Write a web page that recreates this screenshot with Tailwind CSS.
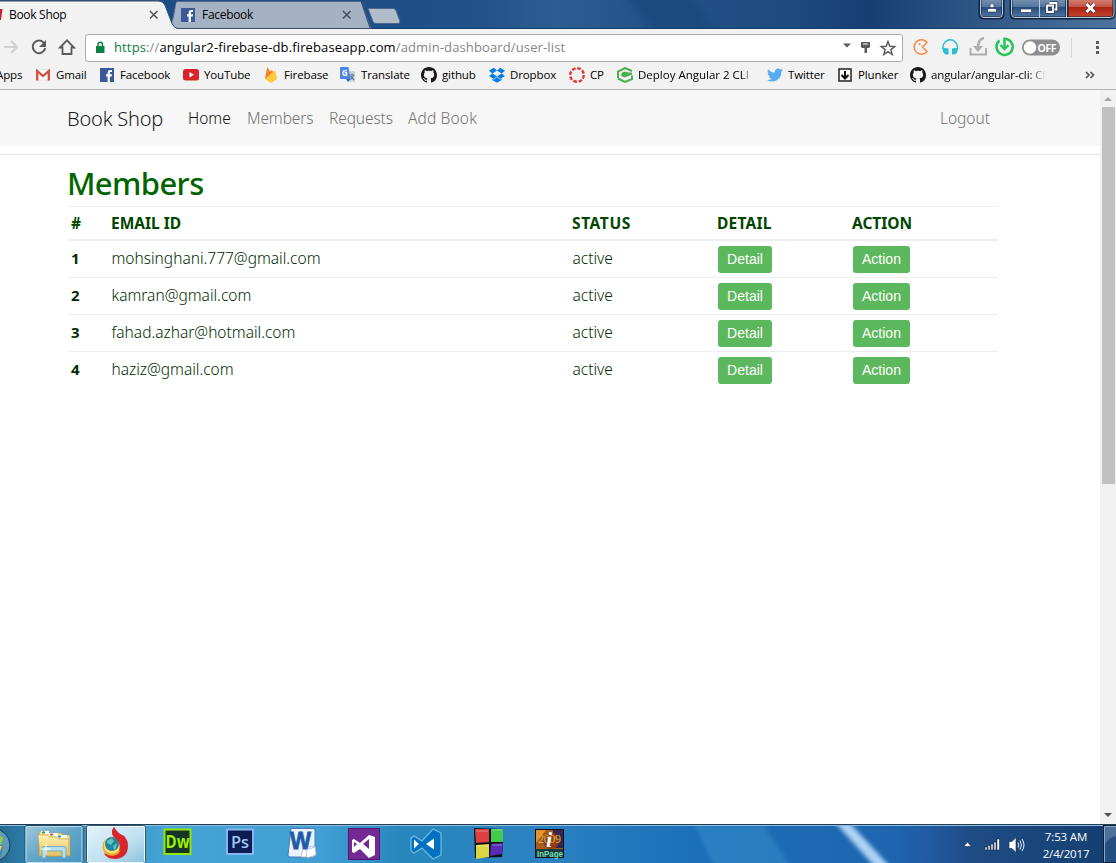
<!DOCTYPE html>
<html lang="en">
<head>
<meta charset="utf-8">
<title>Book Shop</title>
<script src="https://cdn.jsdelivr.net/npm/@tailwindcss/browser@4"></script>
</head>
<body class="w-[1116px] h-[863px] overflow-hidden flex flex-col bg-white font-['Open_Sans',sans-serif] text-black">
<svg class="hidden">
  <symbol id="gh" viewBox="0 0 16 16"><path fill="#181616" d="M8 0C3.58 0 0 3.58 0 8c0 3.54 2.29 6.53 5.47 7.59.4.07.55-.17.55-.38v-1.49c-2.01.37-2.53-.49-2.69-.94-.09-.23-.48-.94-.82-1.13-.28-.15-.68-.52-.01-.53.63-.01 1.08.58 1.23.82.72 1.21 1.87.87 2.33.66.07-.52.28-.87.51-1.07-1.78-.2-3.64-.89-3.64-3.95 0-.87.31-1.59.82-2.15-.08-.2-.36-1.02.08-2.12 0 0 .67-.21 2.2.82.64-.18 1.32-.27 2-.27s1.36.09 2 .27c1.53-1.04 2.2-.82 2.2-.82.44 1.1.16 1.92.08 2.12.51.56.82 1.27.82 2.15 0 3.07-1.87 3.75-3.65 3.95.29.25.54.73.54 1.48v2.2c0 .21.15.46.55.38A8 8 0 0 0 16 8c0-4.42-3.58-8-8-8z"/></symbol>
  <symbol id="fb" viewBox="0 0 14 14"><path fill="#3b5998" d="M0 0h14v14H0z"/><path fill="#fff" d="M7.6 14V8.5H6V6.3h1.6V4.9C7.6 3 8.700 2 10.300 2H12v2.100h-1.100c-.8 0-1 .4-1 1v1.200H12l-.3 2.200H9.900V14z"/></symbol>
</svg>

<!-- Tab strip -->
<header class="relative h-[29px] shrink-0 text-xs">
  <svg class="absolute inset-0" width="1116" height="29">
    <defs><linearGradient id="sky"><stop offset="0" stop-color="#184a84"/><stop offset=".42" stop-color="#205088"/><stop offset=".5" stop-color="#2c5d92"/><stop offset=".57" stop-color="#245389"/><stop offset=".7" stop-color="#1d4b80"/><stop offset=".78" stop-color="#173f72"/><stop offset="1" stop-color="#4d739e"/></linearGradient><filter id="haze"><feGaussianBlur stdDeviation="3 0"/></filter></defs>
    <path fill="url(#sky)" d="M0 0h1116v29H0z"/>
    <path fill="#194779" d="M628 0h66l20 29h-62z" opacity=".6" filter="url(#haze)"/>
    <path fill="#9fadc0" stroke="#596b87" d="M170 28.500 173 18 176.500 1.500H361L371 28.500z"/>
    <path fill="#a5b2c3" d="M174 27 176 3H361L369 28z"/>
    <path fill="#f2f2f2" d="M0 1.500H158Q163 1.500 165 5l7 19q2 4 6 5H0z"/>
    <path fill="none" stroke="#374f71" d="M0 .5H159q4 0 6 5l7 18q2 4 5 5H372M361 1l9 27"/>
    <path fill="#b2bdcb" stroke="#53698a" d="M368 8.500h25q2 0 3 2l4 11q0 2-2 2h-22q-2 0-3-2z"/>
    <path fill="#153f73" d="M372 28h744v1H372z"/>
  </svg>
  <div class="absolute inset-0 flex items-center h-[29px]">
    <svg class="shrink-0" width="9" height="29"><path fill="#c3202e" d="M0 9h2.500L1 20H0z"/></svg>
    <span class="w-[139px] tracking-[-0.3px]">Book Shop</span>
    <svg class="shrink-0" width="33" height="10"><path stroke="#555" stroke-width="1.600" d="m2 1 7.500 7.500m0-7.500L2 8.500"/></svg>
    <svg class="shrink-0" width="14" height="14"><use href="#fb"/></svg>
    <span class="w-[140px] ml-[7px] tracking-[-0.3px]">Facebook</span>
    <svg class="shrink-0" width="12" height="10"><path stroke="#44505e" stroke-width="1.600" d="m1 1 7.500 7.500m0-7.500L1 8.500"/></svg>
  </div>
  <svg class="absolute right-0 top-0" width="138" height="20">
    <defs><linearGradient id="red" x2="0" y2="1"><stop stop-color="#d98b80"/><stop offset=".45" stop-color="#c35748"/><stop offset=".5" stop-color="#ad2213"/><stop offset="1" stop-color="#c34a32"/></linearGradient>
    <linearGradient id="glass" x2="0" y2="1"><stop stop-color="#8099b7"/><stop offset=".48" stop-color="#54759d"/><stop offset=".5" stop-color="#294e7d"/><stop offset="1" stop-color="#557aa6"/></linearGradient></defs>
    <path fill="url(#glass)" stroke="#122440" stroke-width="3" d="M2 -3V14q0 4 4 4H21q4 0 4-4V-3z"/>
    <path fill="none" stroke="#bac9da" d="M2.500 -3V14q0 3.500 3.500 3.500H21q3.500 0 3.500-3.500V-3z"/>
    <path fill="url(#glass)" stroke="#122440" stroke-width="3" d="M33 -3V14q0 4 4 4H89V-3z"/>
    <path fill="url(#red)" stroke="#122440" stroke-width="3" d="M89 -3V18h42q5 0 5-4V-3z"/>
    <path fill="none" stroke="#bac9da" d="M33.500 -3V14q0 3.500 3.500 3.500h95q4 0 4-3.500V-3M61.500 0v17M88.500 0v17"/>
    <path fill="#fff" stroke="#233b5c" stroke-width=".7" d="M12 4.500q2-2 4 0v3h-4zM9.500 12v-2q0-1.500 2-1.500h5q2 0 2 1.500v2zM42.500 9h11v3.500h-11z"/>
    <path fill="none" stroke="#2b4160" stroke-width="3.500" d="M69 5.500h6v6.500h-6zM72 3h6.500v6.500h-2"/>
    <path fill="none" stroke="#fff" stroke-width="1.800" d="M69 5.500h6v6.500h-6zM71.500 3h7v6.500h-2"/>
    <path stroke="#5c3338" stroke-width="4.500" d="m108.500 4 8 8m0-8-8 8"/><path stroke="#fff" stroke-width="2.800" d="m108.500 4 8 8m0-8-8 8"/>
  </svg>
</header>

<!-- Address bar -->
<div class="h-[37px] shrink-0 bg-[#f2f2f2] flex items-center">
  <svg class="shrink-0" width="85" height="37" fill="none" stroke="#5a5a5a" stroke-width="2">
    <path stroke="#d0d0d0" d="M4 18h13m-6-6 6 6-6 6"/>
    <path d="M44 14a6.300 6.300 0 1 0 1.200 5"/><path fill="#5a5a5a" stroke="none" d="M46 11v7h-7z"/>
    <path stroke-width="1.800" d="m60 18.500 7-7.200 7 7.200h-2.500V25h-9v-6.500z"/>
  </svg>
  <div class="w-[818px] h-7 box-border border border-[#a9a9a9] rounded-[3px] bg-white flex items-center text-[14px] text-[#858585]">
    <svg class="ml-[9px] shrink-0" width="19" height="14"><path fill="#0b8043" d="M1 5h8.500v7H1z"/><path fill="none" stroke="#0b8043" stroke-width="1.500" d="M3 5V3.500a2.200 2.200 0 0 1 4.500 0V5"/></svg>
    <span class="w-[727px] whitespace-nowrap text-[13px] tracking-[0.13px]"><span class="text-[#0b8043]">https</span>://<span class="text-black">angular2-firebase-db.firebaseapp.com</span>/admin-dashboard/user-list</span>
    <svg class="shrink-0" width="60" height="26" fill="#5a5a5a">
      <path d="M2 8.500h8L6 12.500z"/><path fill-rule="evenodd" d="M20 7h9v5l-1 1h-2v5h-2.500v-5H21l-1-1zm2 1.500v1h5v-1z"/>
      <path fill="none" stroke="#5a5a5a" stroke-width="1.400" d="m47 6.500 1.800 4.800 5 .2-4 3.100 1.500 4.900-4.300-2.900-4.300 2.900 1.500-4.900-4-3.100 5-.2z"/>
    </svg>
  </div>
  <svg class="shrink-0" width="213" height="37" fill="none">
    <path stroke="#ff8540" stroke-width="1.500" stroke-linejoin="round" d="M24 13.500a7.200 7.200 0 1 0 0 9l-4.500-4.500z"/><circle cx="16.500" cy="15" r="1" fill="#ff8540"/>
    <path stroke="#2bbfd4" stroke-width="1.500" d="M40 20v-2a7.200 7.200 0 0 1 14.400 0v2"/><path fill="#2bbfd4" d="M39.500 19h2.500l3.500.500v6h-3q-3-2-3-6.500zM55 19h-2.500l-3.500.500v6h3q3-2 3-6.500z"/>
    <path stroke="#adadad" stroke-width="2" d="M67.500 19v6.500h15.500V19"/><path stroke="#adadad" stroke-width="2.500" d="M81 9q-6 1-6 10"/><path fill="#adadad" d="M70 17h10l-5 6z"/>
    <path stroke="#27c45c" stroke-width="2.500" d="M96.500 11.500a8.100 8.100 0 1 0 5-1.800v10"/><path stroke="#27c45c" stroke-width="2.400" d="m97.500 16 4 4 4-4"/>
    <rect x="119" y="10.500" width="38" height="16" rx="8" fill="#8e8e8e"/><circle cx="127" cy="18.500" r="6.200" fill="#fff"/>
    <text x="134.500" y="22.500" font-family="Open Sans" font-size="10.500" font-weight="700" fill="#fff" textLength="19">OFF</text>
    <path stroke="#d5d5d5" d="M168.500 9v19"/><path fill="#5a5a5a" d="M193 12h3v3h-3zM193 17h3v3h-3zM193 22h3v3h-3z"/>
  </svg>
</div>

<!-- Bookmarks -->
<nav class="h-6 pb-[5px] shrink-0 bg-[#f2f2f2] border-b border-[#b4b4b4] flex items-center text-[11.5px] tracking-[-0.12px] whitespace-nowrap overflow-hidden">
  <div class="w-9 shrink-0 -indent-[4px]">Apps</div>
  <a class="w-16 shrink-0 flex items-center gap-[6px]"><svg width="14" height="14"><path fill="#fff" stroke="#ccc" stroke-width=".5" d="M0 2h14v10H0z"/><path fill="none" stroke="#d54b3d" stroke-width="2.300" d="M1.200 12.500V3L7 8l5.800-5v9.500"/></svg>Gmail</a>
  <a class="w-[83px] shrink-0 flex items-center gap-[6px]"><svg width="14" height="14"><use href="#fb"/></svg>Facebook</a>
  <a class="w-[82px] shrink-0 flex items-center gap-[5px]"><svg width="16" height="14"><rect y="1" width="16" height="11.500" rx="2.500" fill="#d9242b"/><path fill="#fff" d="m6.500 4 4.500 2.700-4.500 2.800z"/></svg>YouTube</a>
  <a class="w-[75px] shrink-0 flex items-center gap-[6px]"><svg width="13" height="16"><path fill="#f58220" d="m0 12 2-11q.5-1 1 0l2 3.500L7 3l5 9z"/><path fill="#fcca3f" d="m0 12 9-8q1-1 1.500.5L12 12l-5 3.500q-1 .5-2 0z"/></svg>Firebase</a>
  <a class="w-[81px] shrink-0 flex items-center gap-[5px]"><svg width="16" height="16"><path fill="#d3d3d3" d="M7 4h8v11H9z"/><path fill="none" stroke="#657b91" stroke-width="1.200" d="M9.500 8h5M12 6.500V8m1.500 0q-.5 3-3 4.500M10.500 9l3.500 4"/><path fill="#4a86e8" d="M1 0h7.500l2 12H1q-1 0-1-1V1q0-1 1-1z"/><path fill="#2a5cb7" d="M6 12h4.500L8 15z"/><text x="1.800" y="8.500" font-family="Open Sans" font-size="8" font-weight="700" fill="#fff">G</text></svg>Translate</a>
  <a class="w-[68px] shrink-0 flex items-center gap-[5px]"><svg width="16" height="16"><use href="#gh"/></svg>github</a>
  <a class="w-20 shrink-0 flex items-center gap-[5px]"><svg width="16" height="16"><path fill="#007ee5" d="M4.700.8 8 3.500 3.300 6.400 0 3.800zM11.300.8 16 3.800l-3.300 2.600L8 3.500zM0 9l3.300-2.600L8 9.300l-3.300 2.700zM16 9l-3.300-2.600L8 9.300l3.300 2.700zM8 10l3.300 2.700 1.500-.9v1.100L8 15.700l-4.800-2.800v-1.100l1.500.9z"/></svg>Dropbox</a>
  <a class="w-12 shrink-0 flex items-center gap-[5px]"><svg width="16" height="16"><circle cx="8" cy="8" r="6.800" fill="none" stroke="#df3a36" stroke-width="2.400" stroke-dasharray="3.700 1.640"/></svg>CP</a>
  <a class="w-[150px] shrink-0 flex items-center gap-[5px]"><svg width="16" height="16"><path fill="none" stroke="#4caf50" stroke-width="2" d="M1 11V4.500L8 1l7 3M15 8.500V12l-7 3-7-3.500"/><path fill="#4caf50" d="m4 7.500 1-2 3-1 3.500 1 3.500 0v2l-3.500 1.500-3.500 1.500-3-1z"/></svg><span class="w-[116px] overflow-hidden tracking-normal mask-r-from-90% mask-r-to-98%">Deploy Angular 2 CLI A</span></a>
  <a class="w-[71px] shrink-0 flex items-center gap-[5px]"><svg width="16" height="16" viewBox="0 0 24 24"><path fill="#55acee" d="M24 4.600a10 10 0 0 1-2.800.8 5 5 0 0 0 2.100-2.700 10 10 0 0 1-3.100 1.200 4.900 4.900 0 0 0-8.400 4.500A14 14 0 0 1 1.700 3.200a4.900 4.900 0 0 0 1.500 6.500 5 5 0 0 1-2.200-.6 4.900 4.900 0 0 0 3.900 4.900 5 5 0 0 1-2.200.1 4.900 4.900 0 0 0 4.600 3.400A9.900 9.900 0 0 1 0 19.500 14 14 0 0 0 21.500 7.100 10 10 0 0 0 24 4.600z"/></svg>Twitter</a>
  <a class="w-[72px] shrink-0 flex items-center gap-[6px]"><svg width="14" height="14"><path fill="#fff" stroke="#222" stroke-width="1.500" d="M1 1h12v12H1z"/><path fill="none" stroke="#111" stroke-width="2" d="M7 3v7M3.500 7 7 10.500 10.500 7"/></svg>Plunker</a>
  <a class="w-[174px] shrink-0 flex items-center gap-[5px]"><svg width="16" height="16"><use href="#gh"/></svg><span class="w-[117px] overflow-hidden mask-r-from-85% mask-r-to-98%">angular/angular-cli: CLI</span></a>
  <svg class="shrink-0" width="12" height="12" fill="none" stroke="#555" stroke-width="1.700"><path d="m2 3 3 3-3 3m4.500-6 3 3-3 3"/></svg>
</nav>

<!-- Page -->
<div class="flex-1 min-h-0 flex">
  <div class="flex-1 font-['Noto_Sans',sans-serif]">
    <nav class="h-14 bg-[#f7f7f7] flex items-center pl-[67px] pr-[110px] pt-[2px] text-[15.500px] font-light text-[#727272]">
      <a class="w-[121px] text-[20px] text-[#1c1c1c] tracking-[-0.2px] whitespace-nowrap">Book Shop</a>
      <a class="w-[59px] text-[#111]">Home</a>
      <a class="w-[82px] tracking-[-0.1px]">Members</a>
      <a class="w-[79px] tracking-[-0.1px]">Requests</a>
      <a class="flex-1 tracking-[0.15px]">Add Book</a>
      <a>Logout</a>
    </nav>
    <div class="h-[9px] border-b border-[#e4e4e4]"></div>
    <main class="ml-[68px] w-[930px]">
      <h1 class="h-[51px] -ml-px pt-2 text-[31px] leading-[40px] font-medium text-[#006400] tracking-[-0.6px]">Members</h1>
      <table class="w-full table-fixed border-separate border-spacing-0 text-[15.500px] leading-[22px] font-light text-[#022c02]">
        <colgroup><col class="w-10"><col class="w-[461px]"><col class="w-[145px]"><col class="w-[135px]"><col></colgroup>
        <thead class="text-left text-[15.500px] text-[#004600]"><tr class="h-[35px] [&>th]:border-t [&>th]:border-b-2 [&>th]:border-[#eceeef] [&>th]:pl-[3px]"><th>#</th><th>EMAIL ID</th><th class="tracking-[0.6px]">STATUS</th><th class="tracking-[0.2px]">DETAIL</th><th>ACTION</th></tr></thead>
        <tbody class="align-top [&_th]:text-left [&_th]:text-[15px] [&_th]:pl-[3px] [&_th]:pt-[6px] [&_td]:pl-[3.500px] [&_td]:pt-[6px]">
          <tr class="h-[37px] [&>*]:border-b [&>*]:border-[#eceeef]"><th>1</th><td>mohsinghani.777@gmail.com</td><td>active</td><td><button class="block -mt-px ml-[0.5px] pb-px w-[54px] h-[27px] rounded-[3px] bg-[#5cb85c] text-white text-sm font-normal font-['Liberation_Sans',sans-serif]">Detail</button></td><td><button class="block -mt-px ml-[0.5px] pb-px w-[57px] h-[27px] rounded-[3px] bg-[#5cb85c] text-white text-sm font-normal font-['Liberation_Sans',sans-serif]">Action</button></td></tr>
          <tr class="h-[37px] [&>*]:border-b [&>*]:border-[#eceeef]"><th>2</th><td>kamran@gmail.com</td><td>active</td><td><button class="block -mt-px ml-[0.5px] pb-px w-[54px] h-[27px] rounded-[3px] bg-[#5cb85c] text-white text-sm font-normal font-['Liberation_Sans',sans-serif]">Detail</button></td><td><button class="block -mt-px ml-[0.5px] pb-px w-[57px] h-[27px] rounded-[3px] bg-[#5cb85c] text-white text-sm font-normal font-['Liberation_Sans',sans-serif]">Action</button></td></tr>
          <tr class="h-[37px] [&>*]:border-b [&>*]:border-[#eceeef]"><th>3</th><td>fahad.azhar@hotmail.com</td><td>active</td><td><button class="block -mt-px ml-[0.5px] pb-px w-[54px] h-[27px] rounded-[3px] bg-[#5cb85c] text-white text-sm font-normal font-['Liberation_Sans',sans-serif]">Detail</button></td><td><button class="block -mt-px ml-[0.5px] pb-px w-[57px] h-[27px] rounded-[3px] bg-[#5cb85c] text-white text-sm font-normal font-['Liberation_Sans',sans-serif]">Action</button></td></tr>
          <tr class="h-[37px]"><th>4</th><td>haziz@gmail.com</td><td>active</td><td><button class="block -mt-px ml-[0.5px] pb-px w-[54px] h-[27px] rounded-[3px] bg-[#5cb85c] text-white text-sm font-normal font-['Liberation_Sans',sans-serif]">Detail</button></td><td><button class="block -mt-px ml-[0.5px] pb-px w-[57px] h-[27px] rounded-[3px] bg-[#5cb85c] text-white text-sm font-normal font-['Liberation_Sans',sans-serif]">Action</button></td></tr>
        </tbody>
      </table>
    </main>
  </div>
  <div class="w-4 bg-[#f1f1f1] flex flex-col items-center">
    <svg width="16" height="17"><path fill="#a3a3a3" d="M4 11h8L8 7z"/></svg>
    <div class="w-[13px] h-[377px] bg-[#c1c1c1]"></div>
    <svg class="mt-auto" width="16" height="17"><path fill="#505050" d="M4 6h8l-4 4z"/></svg>
  </div>
</div>

<!-- Taskbar -->
<footer class="relative h-[39px] shrink-0 text-white">
  <svg class="absolute inset-0" width="1116" height="39">
    <defs><linearGradient id="bar"><stop stop-color="#276a91"/><stop offset=".02" stop-color="#2b7ba8"/><stop offset=".15" stop-color="#45a4d4"/><stop offset=".29" stop-color="#409fd4"/><stop offset=".36" stop-color="#2787bd"/><stop offset=".48" stop-color="#2c82c2"/><stop offset=".62" stop-color="#1c70b8"/><stop offset=".8" stop-color="#1e65af"/><stop offset=".83" stop-color="#205ba3"/><stop offset=".87" stop-color="#1e4c84"/><stop offset="1" stop-color="#143e70"/></linearGradient><filter id="soft"><feGaussianBlur stdDeviation="2"/></filter>
    <linearGradient id="act" x2="1" y2="1"><stop stop-color="#e5f3fb"/><stop offset=".6" stop-color="#bfdff0"/><stop offset="1" stop-color="#89c1df"/></linearGradient>
    <linearGradient id="idle" x2="1" y2="1"><stop stop-color="#a4c9dc"/><stop offset=".5" stop-color="#62a5c8"/><stop offset="1" stop-color="#4897c2"/></linearGradient></defs>
    <path fill="url(#bar)" d="M0 0h1116v39H0z"/>
    <path fill="#469bd6" opacity=".35" d="M692 -5h68l32 50h-77z" filter="url(#soft)"/>
    <path fill="#add3f5" d="M832 -5h14l46 50h-15z" filter="url(#soft)"/>
    <path fill="#203e58" d="M0 0h1116v1H0z"/><path fill="#91bdda" d="M0 1h1116v1H0z"/>
    <rect x="25" y="1.500" width="58" height="37" rx="2" fill="url(#idle)" stroke="#23495f"/><rect x="26" y="2.500" width="56" height="36" rx="1" fill="none" stroke="#bddbea"/>
    <rect x="86.500" y="1.500" width="59" height="37" rx="2" fill="url(#act)" stroke="#31576d"/><rect x="87.500" y="2.500" width="57" height="36" rx="1" fill="none" stroke="#edf8fd"/>
    <rect x="1103.500" y="1.500" width="14" height="37" fill="#244f82" stroke="#0b213d"/><path fill="none" stroke="#8da7c3" d="M1104.500 38V2.500h12"/><path fill="#4e7099" d="M1105 3h11v9q-7 1-11 8z"/>
  </svg>
  <div class="relative h-[39px] flex items-center">
    <svg class="shrink-0" width="580" height="39">
      <defs><radialGradient id="orb" cx="0" cy=".6" r=".8"><stop stop-color="#4cb9e6"/><stop offset=".7" stop-color="#185382"/><stop offset="1" stop-color="#5e9ab9"/></radialGradient>
      <linearGradient id="fold" x2="0" y2="1"><stop stop-color="#fff2b1"/><stop offset="1" stop-color="#e5c160"/></linearGradient></defs>
      <circle cx="-6" cy="21" r="16" fill="url(#orb)" stroke="#16384f"/><path fill="#98c93d" d="M0 12q2 0 3 2l-2 7H0z"/><path fill="#f6cf4b" d="M0 22h2l-3 8z"/>
      <path fill="#f3dc88" stroke="#b79b4b" stroke-width=".7" d="M39 32V9q0-1 1-1h7l2 2h5V9h7l2 2h6q1 0 1 1v20z"/>
      <path fill="#fff" d="M41 7h8v3h-8zM49 9h9v3h-9zM57 11h10v3H57z"/><path fill="#25a23c" d="M42 7.500h3v2h-3z"/><path fill="#dd4b2f" d="M50 9.500h3v2h-3z"/><path fill="#2e8cd6" d="M58 11.500h3v2h-3z"/>
      <path fill="url(#fold)" stroke="#bd9d4c" stroke-width=".6" d="M38 11h9l2 2h8l2 2h10l-1 17H40z"/>
      <path fill="#b2dff1" stroke="#669cbf" stroke-width=".8" d="M42 34V24q0-1.500 2-1.500h20q2 0 2 1.500v10h-4v-7H46v7z"/><path stroke="#fff" d="M41 25h10M46 19v12"/>
      <path fill="#d9262c" d="M114 3q4 7 10 9 4 4 4 10c0 8-5 13-13 13-6 0-10-3-11-6q8 4 12-1c6-6 3-11-2-15q-4-5 0-10z"/>
      <circle cx="112" cy="22.500" r="9.500" fill="#e9a727"/><circle cx="112" cy="21.500" r="8.300" fill="#f6df72"/><circle cx="112" cy="20" r="7" fill="#25869b"/><path fill="#5fc3c9" d="m107 17 5-3 2 3-3 4-4-2zM113 22l4-3-1 5-2 2z"/>
      <path fill="#d9262c" d="M114 3c-3 5-2 7 0 10 5 4 7 8 5 14l8-4-3-11q-8-3-10-9z"/>
      <rect x="164.500" y="5.500" width="26" height="24.500" fill="#153525" stroke="#94e500" stroke-width="2"/><text x="165.500" y="24" font-family="Open Sans" font-size="17" font-weight="700" fill="#9bf000" textLength="24" lengthAdjust="spacingAndGlyphs">Dw</text>
      <rect x="227" y="5.500" width="26" height="24.500" fill="#0d1c55" stroke="#85b6ef" stroke-width="2"/><text x="231" y="24" font-family="Open Sans" font-size="16" font-weight="600" fill="#9bc8f6" textLength="18" lengthAdjust="spacingAndGlyphs">Ps</text>
      <path fill="#eaf2fc" stroke="#5079b8" d="M291 4.500h22q2 0 2 2V27l-3 6h-22q-2 0-2-2z"/><path fill="#fff" stroke="#9cb0cd" stroke-width=".7" d="m303 24 12-2 1 8-3 3-12 0z"/>
      <text x="290" y="25" font-family="Liberation Sans" font-size="23" font-weight="700" fill="#205ba9" stroke="#205ba9" stroke-width=".8" textLength="21" lengthAdjust="spacingAndGlyphs">W</text>
      <path fill="#fff" stroke="#9cb0cd" stroke-width=".7" d="m306 26 9-3 1 8-9 3z"/>
      <rect x="348.500" y="4.500" width="31" height="31" fill="#742893" stroke="#571569"/><path fill="#fff" fill-rule="evenodd" d="m352 16 2-1 6 4 9-8 6 2v18l-6 3-9-9-6 4-2-1zm2 2v5l3-3zm9 2 6 5V15z"/>
      <path fill="#0072bf" stroke="#76b9e3" stroke-width="1.200" fill-rule="evenodd" d="m411 14 3-2 8 5 11-12 8 4v22l-8 4-11-11-8 5-3-2z"/><path fill="#fff" d="m414 15.500 5 4.500-5 4.500zm20-1v11l-8-5.500z"/>
      <path fill="#111" d="m474 4 28 1 1 14-1 14-27 1z"/><path fill="#dc4040" d="m475 5 14 0v13l-13 1z"/><path fill="#44c94c" d="m491 5 12 0v13l-12 0z"/><path fill="#d8d747" d="m476 21 13-1v13l-13 2z"/><path fill="#5a2bb8" d="m491 20 12-1-1 11-12 2z"/><path stroke="#fff" opacity=".35" d="M476 7h12M492 6h10M477 22h11M492 21h10"/>
      <rect x="535.500" y="5.500" width="28" height="28" fill="#a65b20" stroke="#111"/><path fill="#322653" d="M553 6h10v18h-10z"/><path fill="#153b3e" d="M536 25h27v8h-27z"/><circle cx="551" cy="17" r="8" fill="#933b19"/><path fill="#e5902c" d="M536 6h10l-10 13z"/>
      <text x="538" y="19" font-family="Liberation Serif" font-size="12" fill="#d9b03f" textLength="23">2009</text><text x="546" y="23" font-family="Liberation Serif" font-size="22" font-weight="700" font-style="italic" fill="#fff">i</text><text x="537" y="33" font-family="Liberation Sans" font-size="9.500" font-weight="700" fill="#77dfb0" textLength="26" lengthAdjust="spacingAndGlyphs">InPage</text>
    </svg>
    <svg class="ml-auto shrink-0" width="71" height="39" fill="#fff">
      <path stroke="#1a3151" stroke-width=".7" d="M3.500 22.500h8L7.500 18z"/>
      <path stroke="#142b4c" stroke-width=".6" d="M25 23h2v3h-2zM28 21.500h2V26h-2zM31 20h2v6h-2zM34 18h2v8h-2zM37 15h2.500v11H37z"/>
      <path stroke="#142b4c" stroke-width=".6" d="M49 17.500h3l4-4v15l-4-4h-3z"/><path fill="none" stroke="#e9f0f8" stroke-width="1" d="M58 18.500q1.500 2.500 0 5M60 16.500q3 4.500 0 9M62 15q4 6 0 12"/>
    </svg>
    <div class="w-[70px] mr-[15px] text-center text-[11.500px] leading-[17px] tracking-[-0.15px] pt-[2px]">7:53 AM<br>2/4/2017</div>
  </div>
</footer>
</body>
</html>
